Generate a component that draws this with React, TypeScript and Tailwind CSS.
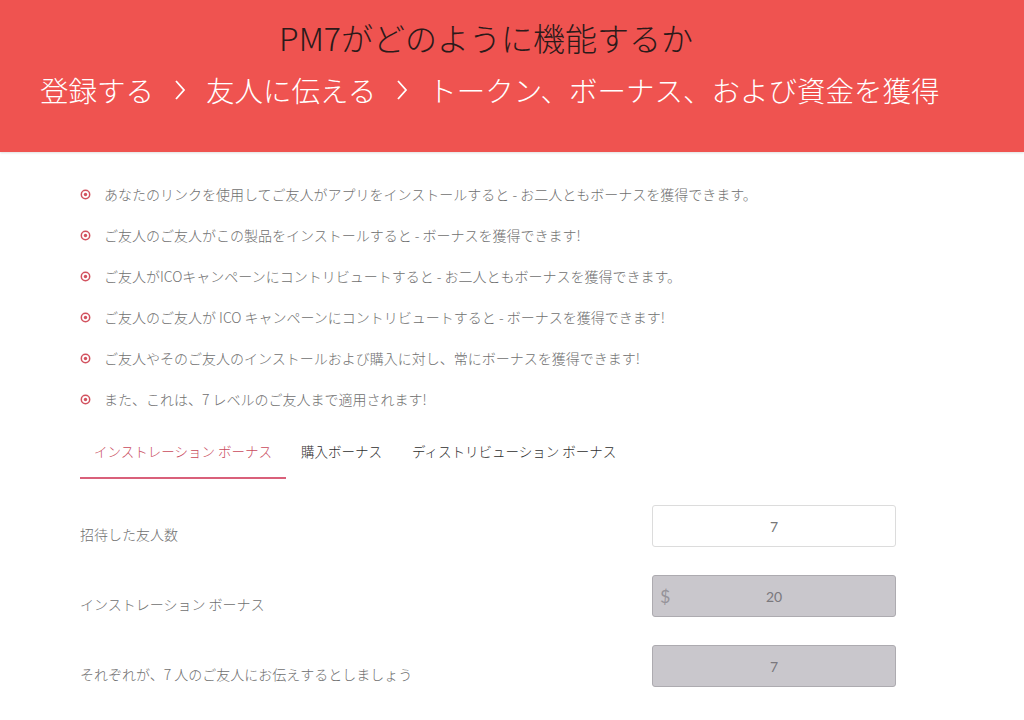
import { useState } from 'react'

const bullets = [
  'あなたのリンクを使用してご友人がアプリをインストールすると - お二人ともボーナスを獲得できます。',
  'ご友人のご友人がこの製品をインストールすると - ボーナスを獲得できます!',
  'ご友人がICOキャンペーンにコントリビュートすると - お二人ともボーナスを獲得できます。',
  'ご友人のご友人が ICO キャンペーンにコントリビュートすると - ボーナスを獲得できます!',
  'ご友人やそのご友人のインストールおよび購入に対し、常にボーナスを獲得できます!',
  'また、これは、7 レベルのご友人まで適用されます!',
]

const tabs = ['インストレーション ボーナス', '購入ボーナス', 'ディストリビューション ボーナス']

function Bullet() {
  return (
    <svg width="11" height="11" viewBox="0 0 11 11" className="shrink-0">
      <circle cx="5.5" cy="5.5" r="4.2" fill="none" stroke="#d2525f" strokeWidth="1.5" />
      <circle cx="5.5" cy="5.5" r="1.7" fill="#d2525f" />
    </svg>
  )
}

function Chevron() {
  return (
    <svg width="14" height="26" viewBox="0 0 14 26" className="mx-[19px] shrink-0">
      <path d="M3 4 L11 13 L3 22" fill="none" stroke="white" strokeWidth="1.8" />
    </svg>
  )
}

export default function App() {
  const [active, setActive] = useState(0)
  const font = { fontFamily: '"Noto Sans CJK JP", "Noto Sans", sans-serif' }
  const num = { fontFamily: 'Lato, "Noto Sans", sans-serif' }

  return (
    <div className="w-[1024px] h-[720px] overflow-hidden bg-white font-light" style={font}>
      {/* header */}
      <div className="h-[152px] bg-[#ef5350] flex flex-col pt-[14px] shadow-[0_1px_2px_rgba(0,0,0,0.12)]">
        <h1 className="text-center text-[32px] leading-[46px] font-light text-[#2b1a1a] mr-[52px]">
          PM7がどのように機能するか
        </h1>
        <div className="mt-[10px] pl-[40px] text-[28.5px] leading-[40px] text-white flex items-center">
          <span>登録する</span>
          <Chevron />
          <span>友人に伝える</span>
          <Chevron />
          <span>トークン、ボーナス、および資金を獲得</span>
        </div>
      </div>

      {/* bullet list */}
      <ul className="mt-[22px] pl-[80px]">
        {bullets.map((b, i) => (
          <li key={i} className="h-[41px] flex items-center gap-[13px] text-[14px] text-[#707070]">
            <Bullet />
            <span>{b}</span>
          </li>
        ))}
      </ul>

      {/* tabs */}
      <div className="mt-[21px] pl-[80px] flex">
        {tabs.map((t, i) => (
          <button
            key={t}
            onClick={() => setActive(i)}
            className={
              i === active
                ? 'px-[14px] pb-[16px] text-[13.5px] leading-5 text-[#c94a5c] border-b-2 border-[#d9607a]'
                : 'px-[15px] pb-[16px] text-[13.5px] leading-5 text-[#2e2e2e] border-b-2 border-transparent'
            }
          >
            {t}
          </button>
        ))}
      </div>

      {/* form */}
      <div className="mt-[26px] pl-[80px] pr-[128px] flex flex-col gap-[28px]">
        <div className="flex items-center">
          <span className="flex-1 pt-[16px] text-[14px] text-[#707070]">招待した友人数</span>
          <div className="w-[244px] h-[42px] border border-[#dcdcdc] rounded-[3px] bg-white flex items-center justify-center text-[14px] font-normal text-[#777]" style={num}>
            7
          </div>
        </div>
        <div className="flex items-center">
          <span className="flex-1 pt-[16px] text-[14px] text-[#707070]">インストレーション ボーナス</span>
          <div className="relative w-[244px] h-[42px] border border-[#adabb0] rounded-[3px] bg-[#c9c7cc] flex items-center justify-center text-[14px] font-normal text-[#7a787d]" style={num}>
            <span className="absolute left-[7px] text-[18px] text-[#96949a]">$</span>
            20
          </div>
        </div>
        <div className="flex items-center">
          <span className="flex-1 pt-[16px] text-[14px] text-[#707070]">それぞれが、7 人のご友人にお伝えするとしましょう</span>
          <div className="w-[244px] h-[42px] border border-[#adabb0] rounded-[3px] bg-[#c9c7cc] flex items-center justify-center text-[14px] font-normal text-[#7a787d]" style={num}>
            7
          </div>
        </div>
      </div>
    </div>
  )
}
